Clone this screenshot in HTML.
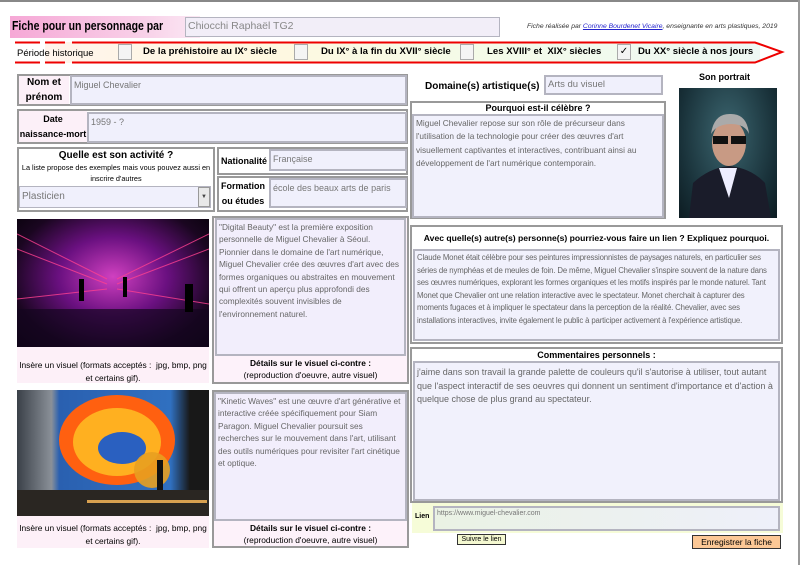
<!DOCTYPE html>
<html><head><meta charset="utf-8"><style>
*{box-sizing:border-box;margin:0;padding:0}
body{width:800px;height:565px;background:#fff;position:relative;overflow:hidden;font-family:"Liberation Sans",sans-serif;color:#000}
.a{position:absolute}
.box{position:absolute;border:2px solid #999;background:#fff}
.lbl{position:absolute;background:#fcf0f8;font-weight:bold;font-size:10px;text-align:center;line-height:15px;display:flex;align-items:center;justify-content:center}
.inp{position:absolute;border:2px solid #b4b4c0;background:#f0f0fc;color:#777;font-size:9.5px;padding:1px 2px;line-height:14px}
.ta{position:absolute;border:2px solid #b4b4c0;background:#f1f1fc;color:#666;font-size:8.3px;padding:1px 2px;line-height:12.4px}
.cb{position:absolute;width:14px;height:16px;border:1px solid #aaa;background:#f4f4f4;top:44px}
.pt{position:absolute;top:46px;font-size:9.6px;font-weight:bold}
.cap{position:absolute;background:#fdf0f8;font-size:8.4px;text-align:center;line-height:13px}
</style></head><body>
<div class="a" style="left:0;top:0;width:800px;height:2px;background:#888"></div>
<div class="a" style="left:798px;top:0;width:2px;height:565px;background:#999"></div>

<div class="a" style="left:10px;top:16px;width:190px;height:22px;background:linear-gradient(90deg,#f6a8d6,#f8d0e8 70%,#fbe8f4)"></div>
<div class="a" style="left:12px;top:19px;font-size:12.5px;font-weight:bold;white-space:nowrap;transform:scaleX(0.84);transform-origin:left top">Fiche pour un personnage par</div>
<div class="inp" style="left:185px;top:17px;width:315px;height:20px;background:#f2eef8;font-size:10.5px;line-height:15px;color:#888;border-width:1px">Chiocchi Raphaël TG2</div>
<div class="a" style="left:527px;top:23px;font-size:6.8px;font-style:italic;color:#333">Fiche réalisée par <span style="color:#22c;text-decoration:underline">Corinne Bourdenet Vicaire</span>, enseignante en arts plastiques, 2019</div>

<div class="a" style="left:45px;top:42px;width:715px;height:21px;background:linear-gradient(90deg,#fff4ec,#fff8e0 30%,#f4fbe8 60%,#eef8f4)"></div>
<svg class="a" style="left:0;top:38px" width="800" height="30">
<g stroke="#e00" stroke-width="2" fill="none">
<line x1="15" y1="4.5" x2="40" y2="4.5"/><line x1="15" y1="24.5" x2="40" y2="24.5"/>
<line x1="45" y1="4.5" x2="65" y2="4.5"/><line x1="45" y1="24.5" x2="65" y2="24.5"/>
<polyline points="72,4.5 755,4.5 782,14 755,24.5 72,24.5"/>
</g></svg>
<div class="pt" style="left:17px;top:48px;font-weight:normal;font-size:9.5px">Période historique</div>
<div class="cb" style="left:118px"></div><div class="pt" style="left:143px">De la préhistoire au IX° siècle</div>
<div class="cb" style="left:294px"></div><div class="pt" style="left:321px">Du IX° à la fin du XVII° siècle</div>
<div class="cb" style="left:460px"></div><div class="pt" style="left:487px">Les XVIII° et&nbsp; XIX° siècles</div>
<div class="cb" style="left:617px;font-size:10px;line-height:14px;text-align:center">✓</div><div class="pt" style="left:638px">Du XX° siècle à nos jours</div>

<div class="box" style="left:17px;top:74px;width:391px;height:32px"></div>
<div class="lbl" style="left:19px;top:76px;width:50px;height:28px">Nom et<br>prénom</div>
<div class="inp" style="left:70px;top:75px;width:337px;height:30px;font-size:9px">Miguel Chevalier</div>

<div class="box" style="left:17px;top:109px;width:391px;height:35px"></div>
<div class="lbl" style="left:19px;top:111px;width:68px;height:31px;font-size:9px">Date<br>naissance-mort</div>
<div class="inp" style="left:87px;top:112px;width:320px;height:31px;font-size:9px">1959 - ?</div>

<div class="box" style="left:17px;top:147px;width:198px;height:65px"></div>
<div class="a" style="left:19px;top:150px;width:194px;text-align:center;font-size:10px;font-weight:bold">Quelle est son activité ?</div>
<div class="a" style="left:19px;top:162px;width:194px;text-align:center;font-size:7.3px;line-height:11px">La liste propose des exemples mais vous pouvez aussi en inscrire d'autres</div>
<div class="inp" style="left:19px;top:186px;width:192px;height:22px;font-size:10px;line-height:17px;border-width:1px">Plasticien</div>
<div class="a" style="left:198px;top:187px;width:12px;height:20px;border:1px solid #999;background:#e8e8e8;font-size:6px;text-align:center;line-height:19px;color:#444">▼</div>

<div class="box" style="left:217px;top:147px;width:191px;height:28px"></div>
<div class="lbl" style="left:219px;top:149px;width:50px;height:24px;background:#fff;font-size:9px">Nationalité</div>
<div class="inp" style="left:269px;top:149px;width:138px;height:22px;font-size:9px">Française</div>
<div class="box" style="left:217px;top:176px;width:191px;height:36px"></div>
<div class="lbl" style="left:219px;top:178px;width:48px;height:32px;background:#fff;font-size:9px">Formation<br>ou études</div>
<div class="inp" style="left:269px;top:178px;width:138px;height:30px;font-size:9px">école des beaux arts de paris</div>

<div class="a" style="left:425px;top:81px;font-size:10px;font-weight:bold">Domaine(s) artistique(s)</div>
<div class="inp" style="left:544px;top:75px;width:119px;height:20px;font-size:9.5px">Arts du visuel</div>
<div class="a" style="left:699px;top:72px;font-size:9px;font-weight:bold">Son portrait</div>
<div class="a" style="left:679px;top:88px;width:98px;height:130px;background:radial-gradient(ellipse at 50% 35%,#3c6670,#183038 70%,#0d1c22)"></div>
<svg class="a" style="left:679px;top:88px" width="98" height="130">
<path d="M10 130 L14 95 Q30 80 50 78 Q72 80 86 95 L92 130 Z" fill="#1a1c2a"/>
<path d="M40 80 L50 110 L58 80 Z" fill="#eef"/>
<ellipse cx="50" cy="55" rx="17" ry="23" fill="#c89a84"/>
<path d="M32 46 Q35 25 52 26 Q68 26 70 46 Q66 36 52 36 Q38 36 32 46Z" fill="#aaa"/>
<rect x="34" y="48" width="15" height="8" fill="#111"/><rect x="52" y="48" width="15" height="8" fill="#111"/>
</svg>

<div class="box" style="left:410px;top:101px;width:256px;height:118px"></div>
<div class="a" style="left:412px;top:103px;width:252px;text-align:center;font-size:9px;font-weight:bold">Pourquoi est-il célèbre ?</div>
<div class="ta" style="left:412px;top:114px;width:252px;height:104px;line-height:13.4px">Miguel Chevalier repose sur son rôle de précurseur dans l'utilisation de la technologie pour créer des œuvres d'art visuellement captivantes et interactives, contribuant ainsi au développement de l'art numérique contemporain.</div>

<div class="a" style="left:17px;top:219px;width:192px;height:128px;background:radial-gradient(ellipse at 50% 45%,#d040c0,#6a1080 40%,#1a0620 75%,#050208)"></div>
<svg class="a" style="left:17px;top:219px" width="192" height="128">
<g stroke="#ff4090" stroke-width="1" opacity=".8"><line x1="0" y1="15" x2="90" y2="60"/><line x1="0" y1="30" x2="90" y2="65"/><line x1="192" y1="15" x2="100" y2="60"/><line x1="192" y1="30" x2="100" y2="65"/><line x1="0" y1="80" x2="90" y2="70"/><line x1="192" y1="85" x2="100" y2="70"/></g>
<rect x="0" y="90" width="192" height="38" fill="#140620" opacity=".7"/>
<g fill="#000"><rect x="62" y="60" width="5" height="22"/><rect x="106" y="58" width="4" height="20"/><rect x="168" y="65" width="8" height="28"/></g>
</svg>
<div class="cap" style="left:17px;top:347px;width:192px;height:36px;padding-top:12px">Insère un visuel (formats acceptés :&nbsp; jpg, bmp, png et certains gif).</div>

<div class="box" style="left:212px;top:216px;width:197px;height:168px;background:#fdf2fa"></div>
<div class="ta" style="left:215px;top:218px;width:191px;height:138px;background:#f2eefc">"Digital Beauty" est la première exposition personnelle de Miguel Chevalier à Séoul. Pionnier dans le domaine de l'art numérique, Miguel Chevalier crée des œuvres d'art avec des formes organiques ou abstraites en mouvement qui offrent un aperçu plus approfondi des complexités souvent invisibles de l'environnement naturel.</div>
<div class="a" style="left:214px;top:357px;width:193px;text-align:center;font-size:8.4px;line-height:12px"><b>Détails sur le visuel ci-contre :</b><br>(reproduction d'oeuvre, autre visuel)</div>

<div class="a" style="left:17px;top:390px;width:192px;height:126px;background:linear-gradient(90deg,#3a4048 0,#8a9098 18%,#2a60b0 22%,#3070c0 80%,#181818 90%)"></div>
<svg class="a" style="left:17px;top:390px" width="192" height="126">
<ellipse cx="100" cy="50" rx="58" ry="45" fill="#ff6010"/>
<ellipse cx="100" cy="52" rx="44" ry="34" fill="#ffb020"/>
<ellipse cx="105" cy="58" rx="24" ry="16" fill="#2a60c0"/>
<ellipse cx="135" cy="80" rx="18" ry="18" fill="#e8a020" opacity=".9"/>
<rect x="0" y="100" width="192" height="26" fill="#2a2622"/>
<rect x="70" y="110" width="120" height="3" fill="#d8a050"/>
<rect x="140" y="70" width="6" height="30" fill="#111"/>
</svg>
<div class="cap" style="left:17px;top:516px;width:192px;height:32px;padding-top:6px">Insère un visuel (formats acceptés :&nbsp; jpg, bmp, png et certains gif).</div>

<div class="box" style="left:212px;top:390px;width:197px;height:158px;background:#fdf2fa"></div>
<div class="ta" style="left:214px;top:392px;width:193px;height:129px;background:#f2eefc">"Kinetic Waves" est une œuvre d'art générative et interactive créée spécifiquement pour Siam Paragon. Miguel Chevalier poursuit ses recherches sur le mouvement dans l'art, utilisant des outils numériques pour revisiter l'art cinétique et optique.</div>
<div class="a" style="left:214px;top:522px;width:193px;text-align:center;font-size:8.4px;line-height:12px"><b>Détails sur le visuel ci-contre :</b><br>(reproduction d'oeuvre, autre visuel)</div>

<div class="box" style="left:410px;top:225px;width:373px;height:119px"></div>
<div class="a" style="left:412px;top:233px;width:369px;text-align:center;font-size:8.6px;font-weight:bold">Avec quelle(s) autre(s) personne(s) pourriez-vous faire un lien ? Expliquez pourquoi.</div>
<div class="ta" style="left:413px;top:249px;width:367px;height:92px;font-size:7.8px;line-height:12.6px;letter-spacing:-0.15px">Claude Monet était célèbre pour ses peintures impressionnistes de paysages naturels, en particulier ses séries de nymphéas et de meules de foin. De même, Miguel Chevalier s'inspire souvent de la nature dans ses œuvres numériques, explorant les formes organiques et les motifs inspirés par le monde naturel. Tant Monet que Chevalier ont une relation interactive avec le spectateur. Monet cherchait à capturer des moments fugaces et à impliquer le spectateur dans la perception de la réalité. Chevalier, avec ses installations interactives, invite également le public à participer activement à l'expérience artistique.</div>

<div class="box" style="left:410px;top:347px;width:373px;height:156px"></div>
<div class="a" style="left:412px;top:350px;width:369px;text-align:center;font-size:9px;font-weight:bold">Commentaires personnels :</div>
<div class="ta" style="left:413px;top:361px;width:367px;height:140px;font-size:9px;line-height:13.5px;padding-top:3px">j'aime dans son travail la grande palette de couleurs qu'il s'autorise à utiliser, tout autant que l'aspect interactif de ses oeuvres qui donnent un sentiment d'importance et d'action à quelque chose de plus grand au spectateur.</div>

<div class="a" style="left:412px;top:503px;width:371px;height:30px;background:#f6fcd8"></div>
<div class="a" style="left:415px;top:513px;font-size:7px;font-weight:bold">Lien</div>
<div class="inp" style="left:433px;top:506px;width:347px;height:25px;font-size:7px;line-height:9px;background:linear-gradient(90deg,#eaf2e4,#eef0fa)">https://www.miguel-chevalier.com</div>
<div class="a" style="left:457px;top:534px;width:49px;height:11px;border:1px solid #333;background:#f4f8d0;font-size:7px;text-align:center;line-height:9px">Suivre le lien</div>
<div class="a" style="left:692px;top:535px;width:89px;height:14px;border:1px solid #333;background:#fcc896;font-size:8.5px;text-align:center;line-height:12px">Enregistrer la fiche</div>
</body></html>
